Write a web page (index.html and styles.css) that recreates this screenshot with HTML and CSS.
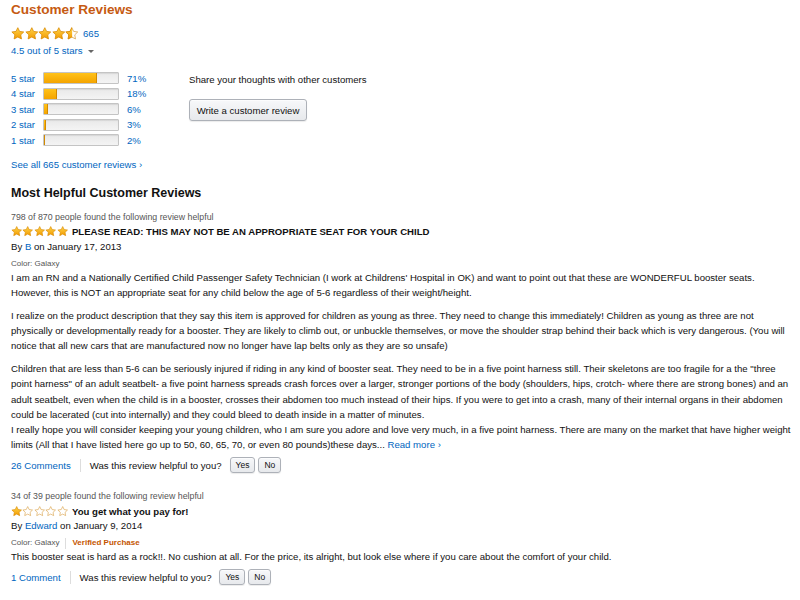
FILE: index.html
```html
<!DOCTYPE html>
<html>
<head>
<meta charset="utf-8">
<link rel="stylesheet" href="styles.css">
</head>
<body>
<svg class="defs" width="0" height="0">
  <defs>
    <linearGradient id="sg" x1="0" y1="0" x2="0" y2="1">
      <stop offset="0" stop-color="#ffd54a"/>
      <stop offset="1" stop-color="#f29a00"/>
    </linearGradient>
    <symbol id="star" viewBox="0 0 24 23">
      <path d="M12 1.2l3.2 6.6 7.3 1-5.3 5.1 1.3 7.2L12 17.7l-6.5 3.4 1.3-7.2-5.3-5.1 7.3-1z" fill="url(#sg)" stroke="#d98a00" stroke-width="1.4" stroke-linejoin="round"/>
    </symbol>
    <symbol id="star-empty" viewBox="0 0 24 23">
      <path d="M12 1.2l3.2 6.6 7.3 1-5.3 5.1 1.3 7.2L12 17.7l-6.5 3.4 1.3-7.2-5.3-5.1 7.3-1z" fill="#fff" stroke="#d9a24a" stroke-width="1.4" stroke-linejoin="round"/>
    </symbol>
    <clipPath id="halfclip"><rect x="0" y="0" width="12.6" height="24"/></clipPath>
    <symbol id="star-half" viewBox="0 0 24 23">
      <path d="M12 1.2l3.2 6.6 7.3 1-5.3 5.1 1.3 7.2L12 17.7l-6.5 3.4 1.3-7.2-5.3-5.1 7.3-1z" fill="#fff" stroke="#d9a24a" stroke-width="1.4" stroke-linejoin="round"/>
      <path d="M12 1.2l3.2 6.6 7.3 1-5.3 5.1 1.3 7.2L12 17.7l-6.5 3.4 1.3-7.2-5.3-5.1 7.3-1z" fill="url(#sg)" stroke="#d98a00" stroke-width="1.4" stroke-linejoin="round" clip-path="url(#halfclip)"/>
    </symbol>
  </defs>
</svg>

<div class="page">
  <h2 class="title">Customer Reviews</h2>

  <div class="summary-stars">
    <span class="stars big">
      <svg><use href="#star"/></svg><svg><use href="#star"/></svg><svg><use href="#star"/></svg><svg><use href="#star"/></svg><svg><use href="#star-half"/></svg>
    </span>
    <a class="link count">665</a>
  </div>
  <div class="avg"><a class="link">4.5 out of 5 stars</a><span class="caret"></span></div>

  <div class="hist-area">
    <div class="hist">
      <a class="link lbl">5 star</a><span class="bar"><span class="fill" style="width:71%"></span></span><a class="link pct">71%</a>
      <a class="link lbl">4 star</a><span class="bar"><span class="fill" style="width:18%"></span></span><a class="link pct">18%</a>
      <a class="link lbl">3 star</a><span class="bar"><span class="fill" style="width:6%"></span></span><a class="link pct">6%</a>
      <a class="link lbl">2 star</a><span class="bar"><span class="fill" style="width:3%"></span></span><a class="link pct">3%</a>
      <a class="link lbl">1 star</a><span class="bar"><span class="fill" style="width:2%"></span></span><a class="link pct">2%</a>
    </div>
    <div class="share">
      <div class="share-text">Share your thoughts with other customers</div>
      <button class="btn write">Write a customer review</button>
    </div>
  </div>

  <a class="link see-all">See all 665 customer reviews ›</a>

  <h3 class="section">Most Helpful Customer Reviews</h3>

  <div class="review">
    <div class="helpful-count">798 of 870 people found the following review helpful</div>
    <div class="review-head">
      <span class="stars small">
        <svg><use href="#star"/></svg><svg><use href="#star"/></svg><svg><use href="#star"/></svg><svg><use href="#star"/></svg><svg><use href="#star"/></svg>
      </span>
      <span class="review-title">PLEASE READ: THIS MAY NOT BE AN APPROPRIATE SEAT FOR YOUR CHILD</span>
    </div>
    <div class="byline">By <a class="link">B</a> on January 17, 2013</div>
    <div class="meta">Color: Galaxy</div>
    <div class="body">
      <p>I am an RN and a Nationally Certified Child Passenger Safety Technician (I work at Childrens' Hospital in OK) and want to point out that these are WONDERFUL booster seats. However, this is NOT an appropriate seat for any child below the age of 5-6 regardless of their weight/height.</p>
      <p>I realize on the product description that they say this item is approved for children as young as three. They need to change this immediately! Children as young as three are not physically or developmentally ready for a booster. They are likely to climb out, or unbuckle themselves, or move the shoulder strap behind their back which is very dangerous. (You will notice that all new cars that are manufactured now no longer have lap belts only as they are so unsafe)</p>
      <p>Children that are less than 5-6 can be seriously injured if riding in any kind of booster seat. They need to be in a five point harness still. Their skeletons are too fragile for a the "three point harness" of an adult seatbelt- a five point harness spreads crash forces over a larger, stronger portions of the body (shoulders, hips, crotch- where there are strong bones) and an adult seatbelt, even when the child is in a booster, crosses their abdomen too much instead of their hips. If you were to get into a crash, many of their internal organs in their abdomen could be lacerated (cut into internally) and they could bleed to death inside in a matter of minutes.<br>I really hope you will consider keeping your young children, who I am sure you adore and love very much, in a five point harness. There are many on the market that have higher weight limits (All that I have listed here go up to 50, 60, 65, 70, or even 80 pounds)these days... <a class="link">Read more ›</a></p>
    </div>
    <div class="actions">
      <a class="link comments">26 Comments</a>
      <span class="sep"></span>
      <span class="ask">Was this review helpful to you?</span>
      <button class="btn small-btn">Yes</button>
      <button class="btn small-btn">No</button>
    </div>
  </div>

  <div class="review second">
    <div class="helpful-count">34 of 39 people found the following review helpful</div>
    <div class="review-head">
      <span class="stars small">
        <svg><use href="#star"/></svg><svg><use href="#star-empty"/></svg><svg><use href="#star-empty"/></svg><svg><use href="#star-empty"/></svg><svg><use href="#star-empty"/></svg>
      </span>
      <span class="review-title normal">You get what you pay for!</span>
    </div>
    <div class="byline">By <a class="link">Edward</a> on January 9, 2014</div>
    <div class="meta">Color: Galaxy<span class="sep meta-sep"></span><span class="verified">Verified Purchase</span></div>
    <div class="body">
      <p>This booster seat is hard as a rock!!. No cushion at all. For the price, its alright, but look else where if you care about the comfort of your child.</p>
    </div>
    <div class="actions">
      <a class="link comments">1 Comment</a>
      <span class="sep"></span>
      <span class="ask">Was this review helpful to you?</span>
      <button class="btn small-btn">Yes</button>
      <button class="btn small-btn">No</button>
    </div>
  </div>
</div>
</body>
</html>
```

FILE: styles.css
```css
* { box-sizing: border-box; }
html, body { margin: 0; padding: 0; background: #fff; }
body {
  font-family: "Liberation Sans", Arial, sans-serif;
  font-size: 9.6px;
  color: #111;
}
.defs { position: absolute; width: 0; height: 0; }
.page { padding: 0 5px 0 11px; width: 800px; }

.link { color: #0066c0; text-decoration: none; }

.title {
  margin: 0;
  padding-top: 1px;
  font-size: 13.6px;
  line-height: 17px;
  font-weight: bold;
  color: #c65a12;
}

.summary-stars { display: flex; align-items: center; margin-top: 8px; height: 14px; }
.stars { display: inline-flex; }
.stars svg { display: block; }
.stars.big svg { width: 13.6px; height: 13px; }
.summary-stars .count { margin-left: 4px; }
.avg { margin-top: 4px; line-height: 14px; display: flex; align-items: center; }
.caret {
  display: inline-block; margin-left: 6px; margin-top: 1px;
  border-left: 3px solid transparent; border-right: 3px solid transparent;
  border-top: 3px solid #666;
}

.hist-area { display: flex; margin-top: 12.5px; }
.hist {
  display: grid;
  grid-template-columns: 32px 76px 40px;
  grid-auto-rows: 15.5px;
  align-items: center;
  width: 178px;
}
.hist .pct { padding-left: 8px; }
.bar {
  display: block; height: 12px;
  border: 1px solid #c4c4c4;
  border-radius: 1px;
  background: linear-gradient(#e9e9e9, #f4f4f4);
  box-shadow: inset 0 1px 1px rgba(0,0,0,0.08);
  overflow: hidden;
}
.fill {
  display: block; height: 100%;
  background: linear-gradient(#ffc21a, #f4a400);
  border-right: 1px solid #d28a00;
}
.share { padding-left: 0; padding-top: 1px; }
.share-text { line-height: 15px; }
.btn {
  font-family: "Liberation Sans", Arial, sans-serif;
  color: #111;
  border: 1px solid #adb1b8;
  border-radius: 3px;
  background: linear-gradient(#f7f8fa, #e7e9ec);
  box-shadow: 0 1px 0 rgba(255,255,255,.6) inset, 0 1px 1px rgba(0,0,0,0.08);
  padding: 0;
  white-space: nowrap;
}
.write {
  display: block; margin-top: 12.5px;
  width: 118px; height: 22px; font-size: 9.6px;
}

.see-all { display: block; margin-top: 8.5px; line-height: 15px; }

.section {
  margin: 13px 0 0 0;
  font-size: 12.5px; line-height: 16px; font-weight: bold; color: #111;
}

.review { margin-top: 9px; }
.helpful-count { font-size: 8.8px; color: #555; line-height: 14px; }
.review-head { display: flex; align-items: center; height: 16px; }
.stars.small svg { width: 11.4px; height: 10.5px; }
.review-title { margin-left: 4px; font-weight: bold; font-size: 9.6px; }
.byline { line-height: 13px; }
.meta { font-size: 8px; color: #555; line-height: 12px; margin-top: 5px; display: flex; align-items: center; }
.meta .meta-sep { margin: 0 6px; height: 11px; }
.verified { color: #c45500; font-weight: bold; }
.body p { margin: 0 0 7.5px 0; line-height: 15.3px; }
.body p:last-child { margin-bottom: 0; }
.actions { display: flex; align-items: center; margin-top: 3.5px; height: 18px; }
.sep { display: inline-block; width: 1px; height: 13px; background: #ddd; margin: 0 9px; }
.small-btn { height: 16px; padding: 0 5px; font-size: 8.5px; margin-right: 3px; }
.ask { margin-right: 8px; }

.review.second { margin-top: 15px; }
```
